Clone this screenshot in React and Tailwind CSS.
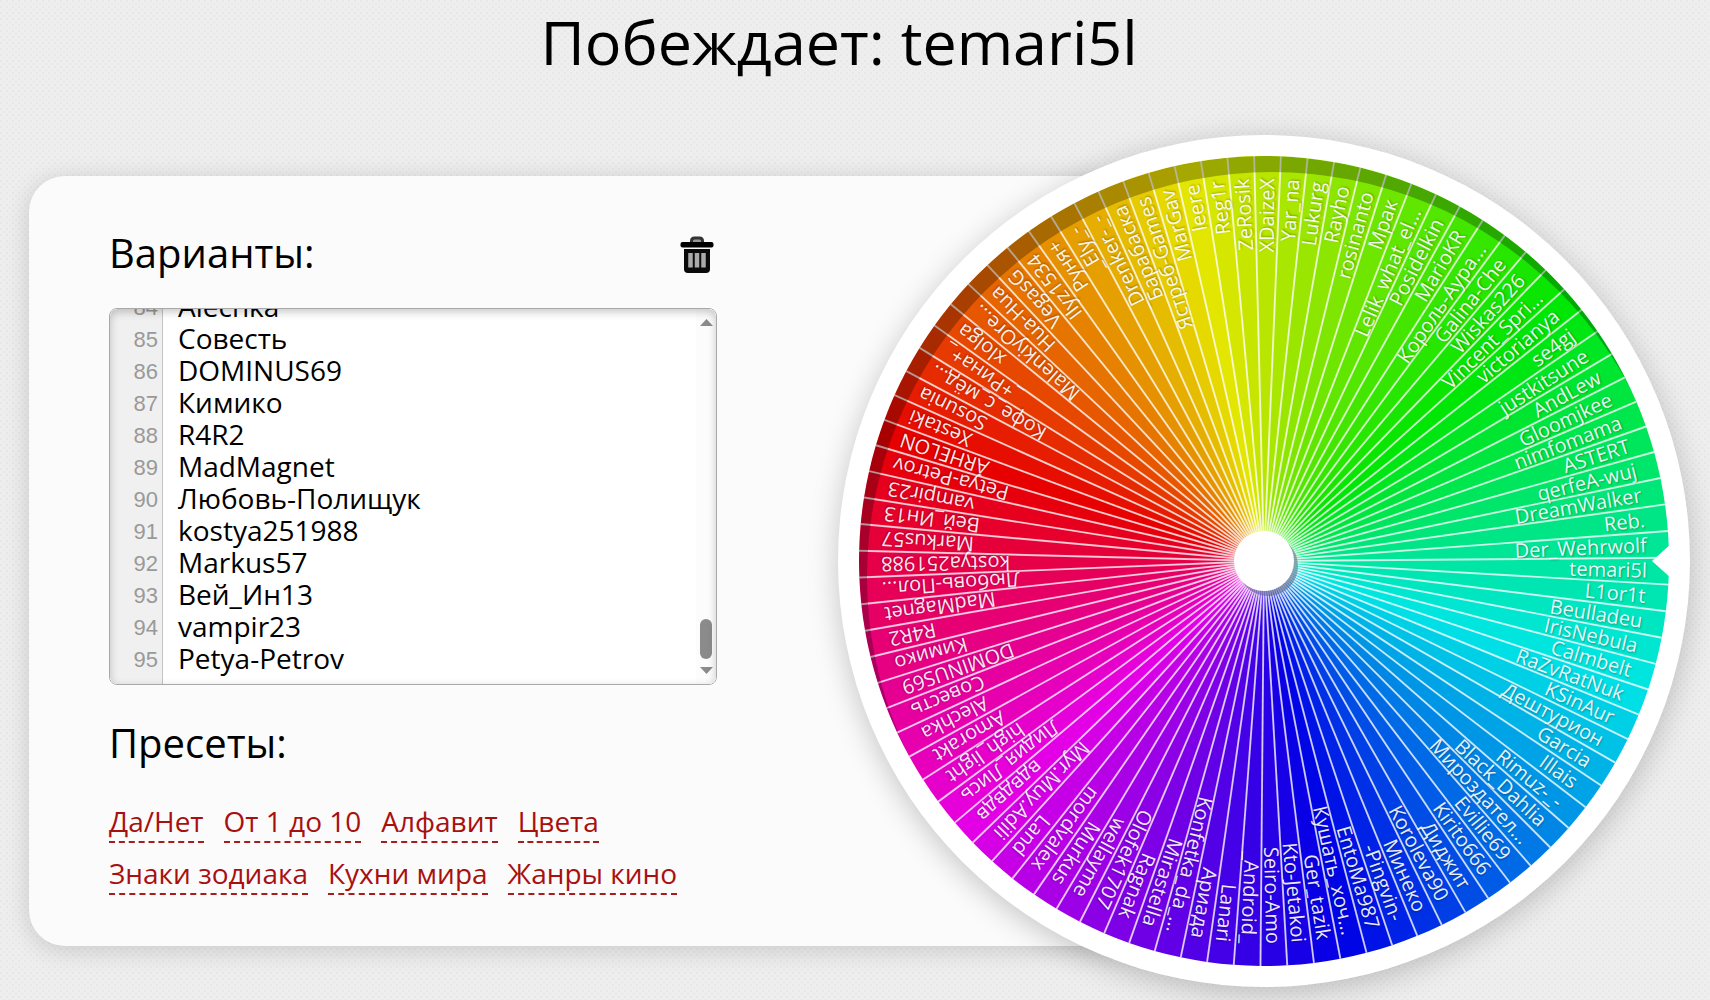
import React, { useEffect, useRef, useState } from 'react';

const NAMES = [
    'ARHELON', 'Xestaki', 'Sosunia', 'Кофе_с_мёд...', '_+Рина+_', 'xlolga', 'MalenkiyOre...', 'Hua-Hua',
    'VegasG', 'Ilyz1534', 'Руня+', '_Ely_-', '_Drenker-_-', 'Барабаска', 'Ястреб-Games', 'MarGav',
    'leere', 'Reg1r', 'ZeRosik', 'XDaizeX', 'Yar_na', 'Lukurg', 'Rayho', 'rosinanto',
    'Мрак', 'Lelik_what_el...', 'Posidelkin', 'MarioKR', 'Король-Аура...', 'Galina-Che', 'Wiskas226', 'Vincent_Spri...',
    'victorianya', 'se4gj', 'justkitsune', 'AndLew', 'Gloomjkee', 'nimfomama', 'ASTERT', 'qerfeA-wuj',
    'DreamWalker', 'Reb.', 'Der_Wehrwolf', 'temari5l', 'L1or1t', 'Beulladeu', 'IrisNebula', 'Calmbelt',
    'RaZvRatNuk', 'KSinAur', 'Дештурион', 'Garcia', 'Illais', 'Rimuz-_-', 'Black_Dahlia', 'Мироздател...',
    'Evillie69', 'Kirito666', 'Диджит', 'Koroleva90', 'Минеко', '-Pingvin-', 'EntoMa987', 'Кушать_хоч...',
    'Ger_tazik', 'Kto-Jetakoi', 'Seiro-Amo', '_Android_', 'Lanari', 'Ариада', 'Konfetka_da_...', 'Mirastella',
    'Ragnak', 'Olofek1707', 'wellayme', 'Murkus', 'mordvalex', 'Land', 'Myr.Muy.Adili', 'вдвдвдв',
    'Лидия_Лись', 'high_light', 'Amorakt', 'Alechka', 'Совесть', 'DOMINUS69', 'Кимико', 'R4R2',
    'MadMagnet', 'Любовь-Полищук', 'kostya251988', 'Markus57', 'Вей_Ин13', 'vampir23', 'Petya-Petrov',
];

const PRESETS = ['Да/Нет', 'От 1 до 10', 'Алфавит', 'Цвета', 'Знаки зодиака', 'Кухни мира', 'Жанры кино'];

const WINNER = 'temari5l';
const CENTER = 426;
const RADIUS = 405;
const ROW = 32;
const VISIBLE_ROWS = 12;

const shorten = (name) => (name.length > 13 && /[а-я]/i.test(name) && !name.endsWith('...') ? `${name.slice(0, 10)}...` : name);

const point = (deg, r = RADIUS) => {
    const a = (deg * Math.PI) / 180;
    return [CENTER + r * Math.cos(a), CENTER + r * Math.sin(a)];
};

function Wheel({ names, winner }) {
    const step = 360 / names.length;
    const start = -0.45 - Math.max(names.indexOf(winner), 0) * step;

    return (
        <svg viewBox="0 0 852 852" className="block w-full rounded-full bg-white shadow-[0_6px_30px_rgba(0,0,0,0.22)]">
            <defs>
                <mask id="rim">
                    <circle cx={CENTER} cy={CENTER} r={RADIUS} fill="#fff" />
                    <circle cx={CENTER + 8} cy={CENTER + 16} r={RADIUS} fill="#000" />
                </mask>
            </defs>
            {names.map((name, i) => {
                const [x1, y1] = point(start + i * step);
                const [x2, y2] = point(start + (i + 1) * step);
                return (
                    <path
                        key={name}
                        d={`M${CENTER} ${CENTER}L${x1} ${y1}A${RADIUS} ${RADIUS} 0 0 1 ${x2} ${y2}Z`}
                        fill={`hsl(${(i * 360) / names.length} 100% 45%)`}
                    />
                );
            })}
            {names.map((name, i) => {
                const [x, y] = point(start + i * step);
                return <line key={name} x1={CENTER} y1={CENTER} x2={x} y2={y} stroke="#fff" strokeOpacity="0.75" strokeWidth="1.9" />;
            })}
            <g className="fill-white font-['Open_Sans','Noto_Sans',sans-serif] text-[20px] [text-shadow:1px_1px_2px_rgba(0,0,0,0.3)]" fillOpacity="0.92">
                {names.map((name, i) => (
                    <text
                        key={name}
                        x={CENTER + 383}
                        y={CENTER}
                        dy="7"
                        textAnchor="end"
                        transform={`rotate(${start + (i + 0.5) * step} ${CENTER} ${CENTER})`}
                    >
                        {shorten(name)}
                    </text>
                ))}
            </g>
            <circle cx={CENTER} cy={CENTER} r={RADIUS} fill="#000" fillOpacity="0.27" mask="url(#rim)" />
            <path d="M834 408L814 426L834 444Z" fill="#fff" />
            <circle cx={CENTER + 4} cy={CENTER + 5} r="30" fill="#4b5578" fillOpacity="0.5" />
            <circle cx={CENTER} cy={CENTER} r="30" fill="#fff" />
        </svg>
    );
}

function TrashIcon() {
    return (
        <svg viewBox="0 0 34 38" className="block h-[38px] w-[34px]">
            <path d="M11.5 7V5Q11.5 2 14.500 2h5Q22.500 2 22.500 5v2" fill="#999" stroke="#333" strokeWidth="3" />
            <rect x="0.500" y="6" width="33" height="5.500" rx="2" fill="#000" />
            <path d="M4 13h26v20q0 4-4 4h-18Q4 37 4 33Z" fill="#0a0a0a" />
            <path d="M10.500 17v14.500M17 17v14.500M23.500 17v14.500" stroke="#aaa" strokeWidth="4.500" />
        </svg>
    );
}

function OptionsEditor({ value, onChange }) {
    const textRef = useRef(null);
    const [scroll, setScroll] = useState(0);

    const syncScroll = () => setScroll(textRef.current.scrollTop);

    useEffect(() => {
        textRef.current.scrollTop = textRef.current.scrollHeight;
        syncScroll();
    }, []);

    // only the line numbers in view are rendered
    const offset = scroll - 10;
    const first = Math.max(Math.floor(offset / ROW), 0);
    const numbers = value.split('\n').map((_, i) => i + 1).slice(first, first + VISIBLE_ROWS);

    return (
        <div className="relative flex h-[377px] overflow-hidden rounded-lg border border-[#a9a9a9] bg-white">
            <div className="w-[53px] shrink-0 overflow-hidden border-r border-[#c4c4c4] bg-[#f0f0f0] pr-1 text-right font-['Liberation_Sans',sans-serif] text-[22px] leading-8 text-[#999]">
                <ol style={{ marginTop: first * ROW - offset }}>
                    {numbers.map((n) => (
                        <li key={n}>{n}</li>
                    ))}
                </ol>
            </div>
            <textarea
                id="options"
                ref={textRef}
                value={value}
                onChange={(e) => onChange(e.target.value)}
                onScroll={syncScroll}
                spellCheck={false}
                wrap="off"
                className="block min-w-0 flex-1 resize-none bg-transparent pt-2 pb-[10px] pl-[15px] text-[28px] leading-8 text-black outline-none [scrollbar-width:none]"
            />
            <div className="flex w-5 shrink-0 flex-col items-center justify-between bg-[#fcfcfc] py-[10px]">
                <svg viewBox="0 0 13 7" className="h-[7px] w-[13px]"><path d="M0 7L6.5 0L13 7Z" fill="#8b8b8b" /></svg>
                <div className="flex flex-col items-center gap-2">
                    <div className="h-10 w-3 rounded-full bg-[#8b8b8b]" />
                    <svg viewBox="0 0 13 7" className="h-[7px] w-[13px]"><path d="M0 0L6.5 7L13 0Z" fill="#8b8b8b" /></svg>
                </div>
            </div>
            <div className="pointer-events-none absolute inset-0 rounded-lg shadow-[inset_0_3px_8px_rgba(0,0,0,0.22)]" />
        </div>
    );
}

export default function App() {
    const [text, setText] = useState(NAMES.join('\n'));
    const names = [...new Set(text.split('\n').filter(Boolean))];

    return (
        <div className="min-h-screen bg-[#eeeeee] bg-[radial-gradient(circle_at_1px_1px,#e7e7e7_1px,transparent_1px),radial-gradient(circle_at_4px_4px,#e9e9e9_1px,transparent_1px)] bg-size-[6px_6px] pb-[13px] font-['Open_Sans','Noto_Sans',sans-serif] text-black">
            <h1 className="h-[135px] pr-8 text-center text-[61px] leading-[84px]">Побеждает: {WINNER}</h1>

            <main className="flex items-center pr-5 pl-[29px]">
                <section className="min-w-0 flex-1 rounded-[36px] bg-[#fbfbfb] pt-[49px] pb-[51px] pl-20 shadow-[0_4px_24px_rgba(0,0,0,0.16)]">
                    <div className="max-w-[608px]">
                        <div className="mb-[27px] flex items-center justify-between">
                            <label htmlFor="options" className="text-[40px] leading-[56px]">Варианты:</label>
                            <button type="button" aria-label="Очистить" className="pt-1 pr-[3px]" onClick={() => setText('')}>
                                <TrashIcon />
                            </button>
                        </div>

                        <OptionsEditor value={text} onChange={setText} />

                        <h2 className="mt-[30px] text-[40px] leading-[56px]">Пресеты:</h2>
                        <nav className="mt-[30px] flex flex-wrap gap-x-5 gap-y-[10px]">
                            {PRESETS.map((p) => (
                                <a key={p} href="#" className="border-b-2 border-dashed border-[#a81c1c] text-[28px] leading-10 text-[#a81010]">
                                    {p}
                                </a>
                            ))}
                        </nav>
                    </div>
                </section>

                <div className="-ml-[426px] w-[852px] shrink-0">
                    <Wheel names={names} winner={WINNER} />
                </div>
            </main>
        </div>
    );
}
